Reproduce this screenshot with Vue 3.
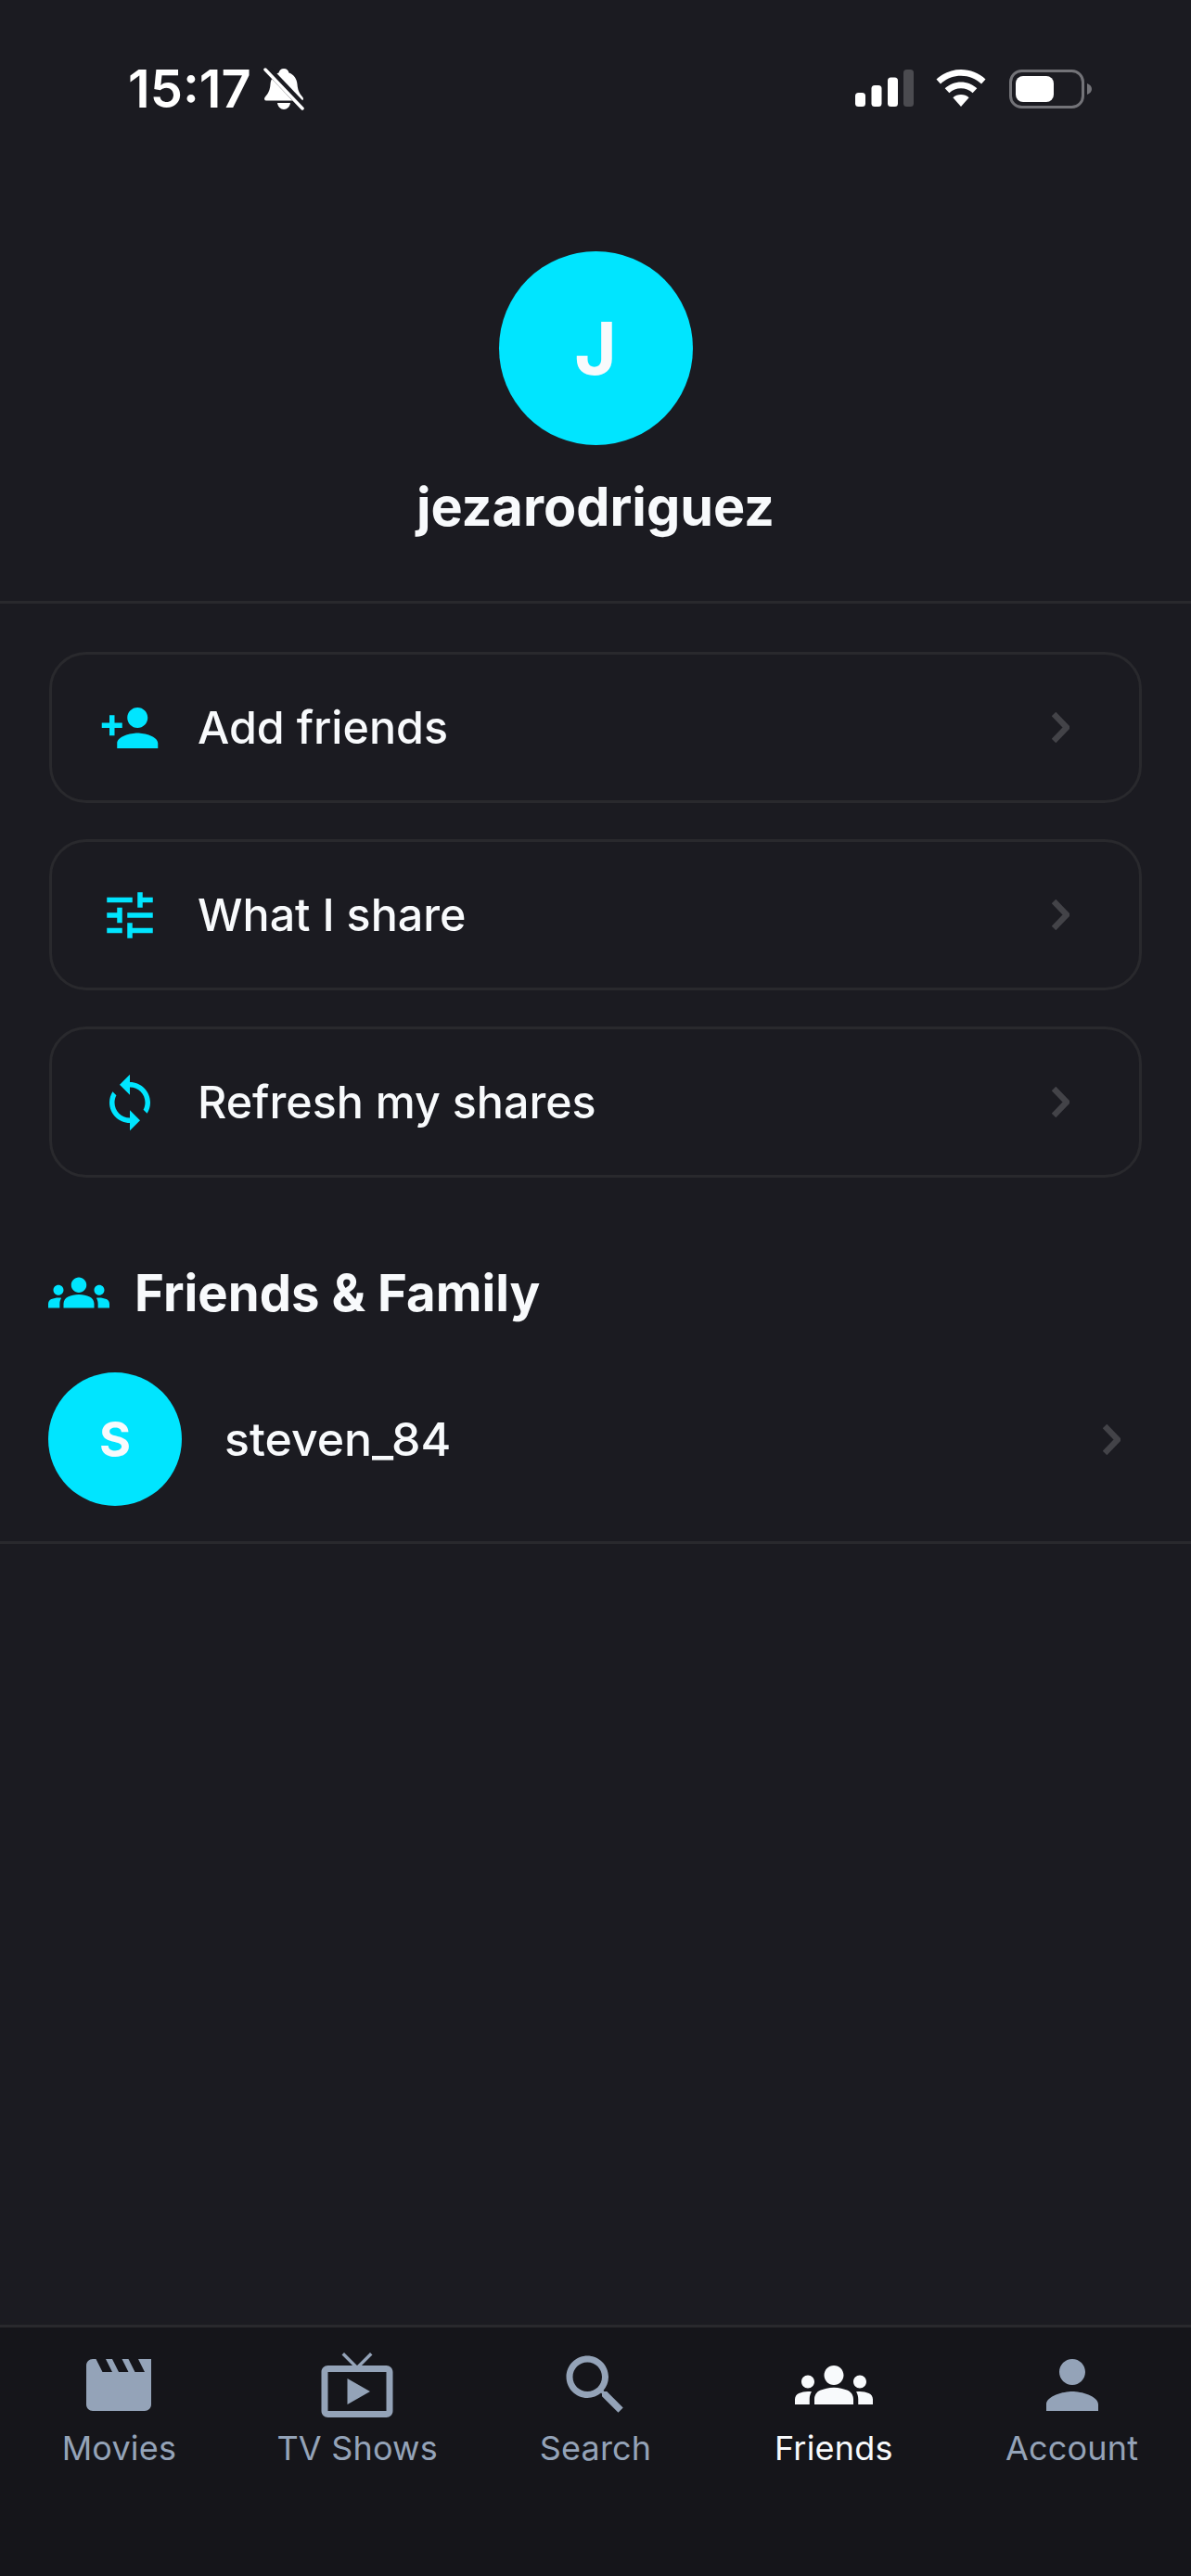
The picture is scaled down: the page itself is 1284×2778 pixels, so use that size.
<script setup>
const actions = [
  { label: 'Add friends', d: 'M15 12c2.21 0 4-1.79 4-4s-1.79-4-4-4-4 1.79-4 4 1.79 4 4 4zm-9-2V7H4v3H1v2h3v3h2v-3h3v-2H6zm9 4c-2.67 0-8 1.34-8 4v2h16v-2c0-2.66-5.33-4-8-4z' },
  { label: 'What I share', d: 'M3 17v2h6v-2H3zM3 5v2h10V5H3zm10 16v-2h8v-2h-8v-2h-2v6h2zM7 9v2H3v2h4v2h2V9H7zm14 4v-2H11v2h10zm-6-4h2V7h4V5h-4V3h-2v6z' },
  { label: 'Refresh my shares', d: 'M12 4V1L8 5l4 4V6c3.31 0 6 2.69 6 6 0 1.01-.25 1.97-.7 2.8l1.46 1.46C19.54 15.03 20 13.57 20 12c0-4.42-3.58-8-8-8zm0 14c-3.31 0-6-2.69-6-6 0-1.01.25-1.97.7-2.8L5.24 7.74C4.46 8.97 4 10.43 4 12c0 4.42 3.58 8 8 8v3l4-4-4-4v3z' }
]
const groups = 'M12 12.75c1.63 0 3.07.39 4.24.9 1.08.48 1.76 1.56 1.76 2.73V18H6v-1.61c0-1.18.68-2.26 1.76-2.73 1.17-.52 2.61-.91 4.24-.91zM4 13c1.1 0 2-.9 2-2s-.9-2-2-2-2 .9-2 2 .9 2 2 2zm1.13 1.1c-.37-.06-.74-.1-1.13-.1-.99 0-1.93.21-2.78.58C.48 14.9 0 15.62 0 16.43V18h4.5v-1.61c0-.83.23-1.61.63-2.29zM20 13c1.1 0 2-.9 2-2s-.9-2-2-2-2 .9-2 2 .9 2 2 2zm4 3.43c0-.81-.48-1.53-1.22-1.85-.85-.37-1.79-.58-2.78-.58-.39 0-.76.04-1.13.1.4.68.63 1.46.63 2.29V18H24v-1.57zM12 6c1.66 0 3 1.34 3 3s-1.34 3-3 3-3-1.34-3-3 1.34-3 3-3z'
const tabs = [
  { label: 'Movies', d: 'M18 4l2 4h-3l-2-4h-2l2 4h-3l-2-4H8l2 4H7L5 4H4c-1.1 0-1.99.9-1.99 2L2 18c0 1.1.9 2 2 2h16c1.1 0 2-.9 2-2V4h-4z' },
  { label: 'TV Shows', d: 'M21 6h-7.59l3.3-3.29L16 2l-4 4-4-4-.71.71L10.59 6H3c-1.1 0-2 .89-2 2v12c0 1.1.9 2 2 2h18c1.1 0 2-.9 2-2V8c0-1.11-.9-2-2-2zm0 14H3V8h18v12zM9 10v8l7-4z' },
  { label: 'Search', d: 'M15.5 14h-.79l-.28-.27C15.41 12.59 16 11.11 16 9.5 16 5.91 13.09 3 9.5 3S3 5.91 3 9.5 5.91 16 9.5 16c1.61 0 3.09-.59 4.23-1.57l.27.28v.79l5 4.99L20.49 19l-4.99-5zm-6 0C7.01 14 5 11.99 5 9.5S7.01 5 9.5 5 14 7.01 14 9.5 11.99 14 9.5 14z' },
  { label: 'Friends', d: groups, active: true },
  { label: 'Account', d: 'M12 12c2.21 0 4-1.79 4-4s-1.79-4-4-4-4 1.79-4 4 1.79 4 4 4zm0 2c-2.67 0-8 1.34-8 4v2h16v-2c0-2.66-5.33-4-8-4z' }
]
</script>

<template>
  <div class="screen">
    <header class="status">
      <div class="status-left">
        <span class="time">15:17</span>
        <svg class="bell" viewBox="0 0 44 46">
          <path d="M22 1c3 0 5 2 5.500 4.500C33 7.500 36 12 36.500 18c.5 6 2 9.500 6 14 1 1.500.5 3.500-1.500 3.500H3C1 35.500.5 33.500 1.500 32c4-4.500 5.500-8 6-14 .5-6 3.500-10.500 9-12.500C17 3 19 1 22 1z" fill="#fff"/>
          <path d="M15 38h14c-.5 4-3.500 7-7 7s-6.500-3-7-7z" fill="#fff"/>
          <path d="M3 0L44 43" stroke="#1b1b21" stroke-width="8"/>
          <path d="M2 2L42 44" stroke="#fff" stroke-width="3.500" stroke-linecap="round"/>
        </svg>
      </div>
      <div class="status-right">
        <svg class="signal" viewBox="0 0 63 40">
          <rect x="0" y="25" width="11" height="15" rx="3.500" fill="#fff"/>
          <rect x="17.500" y="17" width="11" height="23" rx="3.500" fill="#fff"/>
          <rect x="35" y="8.500" width="11" height="31.500" rx="3.500" fill="#fff"/>
          <rect x="52" y="0" width="11" height="40" rx="3.500" fill="#4b4b50"/>
        </svg>
        <svg class="wifi" viewBox="0 0 54 40">
          <path d="M27 0c10 0 19.500 3.800 26.500 10.500L49 15.500C43 10 35.500 6.800 27 6.800S11 10 5 15.500L.5 10.500C7.500 3.800 17 0 27 0z" fill="#fff"/>
          <path d="M27 13.500c6.500 0 12.500 2.500 17.300 6.700l-4.700 5C36 22 31.700 20.300 27 20.300S18 22 14.400 25.200l-4.700-5C14.500 16 20.500 13.500 27 13.500z" fill="#fff"/>
          <path d="M27 27c3.300 0 6.300 1.200 8.600 3.200L27 40l-8.600-9.800C20.700 28.200 23.700 27 27 27z" fill="#fff"/>
        </svg>
        <svg class="battery" viewBox="0 0 89 42">
          <rect x="1.500" y="1.500" width="78" height="39" rx="12" fill="none" stroke="#737378" stroke-width="3"/>
          <rect x="7" y="7" width="41" height="28" rx="8" fill="#fff"/>
          <path d="M84 15c2.800 1 5 3 5 6s-2.200 5-5 6z" fill="#737378"/>
        </svg>
      </div>
    </header>

    <section class="profile">
      <div class="avatar avatar-large">J</div>
      <h1 class="username">jezarodriguez</h1>
    </section>

    <main class="content">
      <nav class="actions">
        <div v-for="a in actions" :key="a.label" class="card">
          <svg class="row-icon" viewBox="0 0 24 24"><path :d="a.d"/></svg>
          <span class="card-label">{{ a.label }}</span>
          <svg class="chevron" viewBox="0 0 19 33"><path d="M2 2l14 14.500L2 31" /></svg>
        </div>
      </nav>

      <h2 class="section-title">
        <svg class="row-icon section-icon" viewBox="0 0 24 24"><path :d="groups"/></svg>
        Friends &amp; Family
      </h2>

      <div class="friend">
        <div class="avatar avatar-small">S</div>
        <span class="friend-name">steven_84</span>
        <svg class="chevron" viewBox="0 0 19 33"><path d="M2 2l14 14.500L2 31" /></svg>
      </div>
    </main>

    <footer class="tabbar">
      <div v-for="t in tabs" :key="t.label" class="tab" :class="{ active: t.active }">
        <svg class="tab-icon" viewBox="0 0 24 24"><path :d="t.d"/></svg>
        <span class="tab-label">{{ t.label }}</span>
      </div>
    </footer>
  </div>
</template>

<style scoped>
.screen {
  width: 1284px;
  height: 2778px;
  display: flex;
  flex-direction: column;
  background: #1b1b21;
  color: #f8fafc;
  font-family: Inter, "Liberation Sans", sans-serif;
  overflow: hidden;
}
.status {
  height: 271px;
  flex: none;
  display: flex;
  justify-content: space-between;
  align-items: flex-start;
  padding: 73px 107px 0 138px;
  box-sizing: border-box;
}
.status-left { display: flex; align-items: center; gap: 13px; height: 46px; }
.time { font-size: 56px; font-weight: 600; color: #fff; line-height: 46px; }
.bell { width: 44px; height: 46px; }
.status-right { display: flex; align-items: flex-start; padding-top: 2px; }
.signal { width: 63px; height: 40px; }
.wifi { width: 54px; height: 40px; margin-left: 24px; }
.battery { width: 89px; height: 42px; margin-left: 25px; }
.profile {
  display: flex;
  flex-direction: column;
  align-items: center;
  height: 377px;
  flex: none;
  border-bottom: 3px solid #29292d;
}
.avatar {
  border-radius: 50%;
  background: #00e5ff;
  color: #f8fafc;
  display: flex;
  align-items: center;
  justify-content: center;
  font-weight: 650;
  flex: none;
}
.avatar-large { width: 209px; height: 209px; font-size: 78px; }
.avatar-small { width: 144px; height: 144px; font-size: 52px; }
.username {
  margin: 32px 0 0;
  font-size: 57.500px;
  line-height: 68px;
  font-weight: 650;
}
.content {
  flex: 1;
  padding: 52px 53px 0;
}
.actions { display: flex; flex-direction: column; gap: 39px; }
.card {
  height: 163px;
  box-sizing: border-box;
  border: 3px solid #29292d;
  border-radius: 40px;
  padding: 0 75px 0 51px;
  display: flex;
  align-items: center;
}
.row-icon { width: 66px; height: 66px; fill: #00e5ff; flex: none; }
.card-label { margin-left: 40px; font-size: 48.400px; font-weight: 540; flex: 1; }
.chevron { width: 19px; height: 33px; flex: none; }
.chevron path { fill: none; stroke: #434348; stroke-width: 6.500; }
.section-title {
  margin: 91px 0 0 -1px;
  display: flex;
  align-items: center;
  font-size: 54.500px;
  line-height: 66px;
  font-weight: 650;
  gap: 27px;
}
.friend {
  margin: 53px -53px 0;
  padding: 0 76px 38px 52px;
  display: flex;
  align-items: center;
  border-bottom: 3px solid #29292d;
}
.friend-name { margin-left: 46px; font-size: 50px; font-weight: 500; flex: 1; }
.tabbar {
  height: 271px;
  flex: none;
  box-sizing: border-box;
  display: flex;
  background: #15151a;
  border-top: 3px solid #29292d;
  padding-top: 20px;
}
.tab {
  flex: 1;
  display: flex;
  flex-direction: column;
  align-items: center;
  color: #94a3b8;
}
.tab.active { color: #f8fafc; }
.tab-icon { width: 84px; height: 84px; fill: currentColor; }
.tab-label { margin-top: 4px; font-size: 36px; line-height: 44px; letter-spacing: 0.2px; }
</style>
